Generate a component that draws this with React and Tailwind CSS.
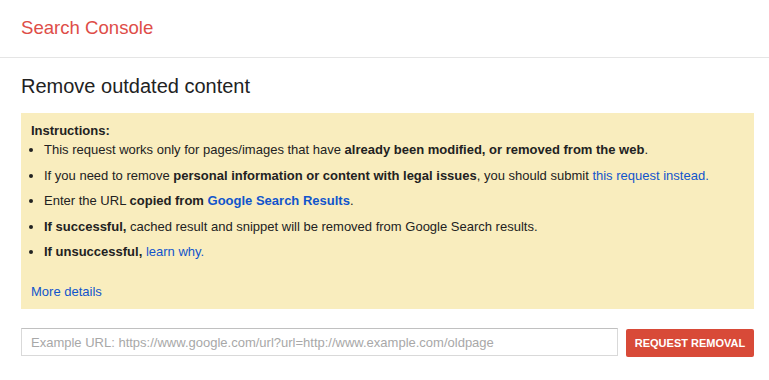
export default function App() {
  const body = { fontFamily: '"Liberation Sans", Arial, sans-serif' };
  return (
    <div className="min-h-[380px] w-full bg-white text-[#222]" style={body}>
      <header className="h-[58px] border-b border-[#e5e5e5] pl-[21px] pt-[16px]">
        <div className="text-[18.6px] leading-[24px] text-[#de4d48]">Search Console</div>
      </header>
      <main className="pl-[21px] pr-[15px]">
        <h1 className="mt-[14px] text-[20px] font-normal leading-[28px] text-[#222]">Remove outdated content</h1>
        <section className="mt-[13px] bg-[#f9edbe] pb-[9px] pl-[10px] pr-[10px] pt-[9px] text-[13px] leading-[17px]">
          <div className="font-bold">Instructions:</div>
          <ul className="mt-[2px] list-disc space-y-[8.5px] pl-[13px]">
            <li>
              This request works only for pages/images that have{' '}
              <b>already been modified, or removed from the web</b>.
            </li>
            <li>
              If you need to remove <b>personal information or content with legal issues</b>, you should submit{' '}
              <a className="text-[#1155cc]" href="#">this request instead.</a>
            </li>
            <li>
              Enter the URL <b>copied from</b>{' '}
              <a className="font-bold text-[#1155cc]" href="#">Google Search Results</a>.
            </li>
            <li>
              <b>If successful,</b> cached result and snippet will be removed from Google Search results.
            </li>
            <li>
              <b>If unsuccessful,</b>{' '}
              <a className="text-[#1155cc]" href="#">learn why.</a>
            </li>
          </ul>
          <div className="mt-[23px]">
            <a className="text-[#1155cc]" href="#">More details</a>
          </div>
        </section>
        <div className="mt-[19px] flex items-start gap-[8px]">
          <input
            className="h-[28px] flex-1 border border-[#d9d9d9] border-t-[#c0c0c0] px-[9px] text-[13px] text-[#222] placeholder:text-[#a8a8a8] outline-none"
            style={body}
            placeholder="Example URL: https://www.google.com/url?url=http://www.example.com/oldpage"
          />
          <button
            className="mt-[1px] h-[28px] w-[128px] rounded-[2px] bg-[#d84a38] text-[11px] font-bold uppercase text-white"
            style={body}
          >
            Request removal
          </button>
        </div>
      </main>
    </div>
  );
}
